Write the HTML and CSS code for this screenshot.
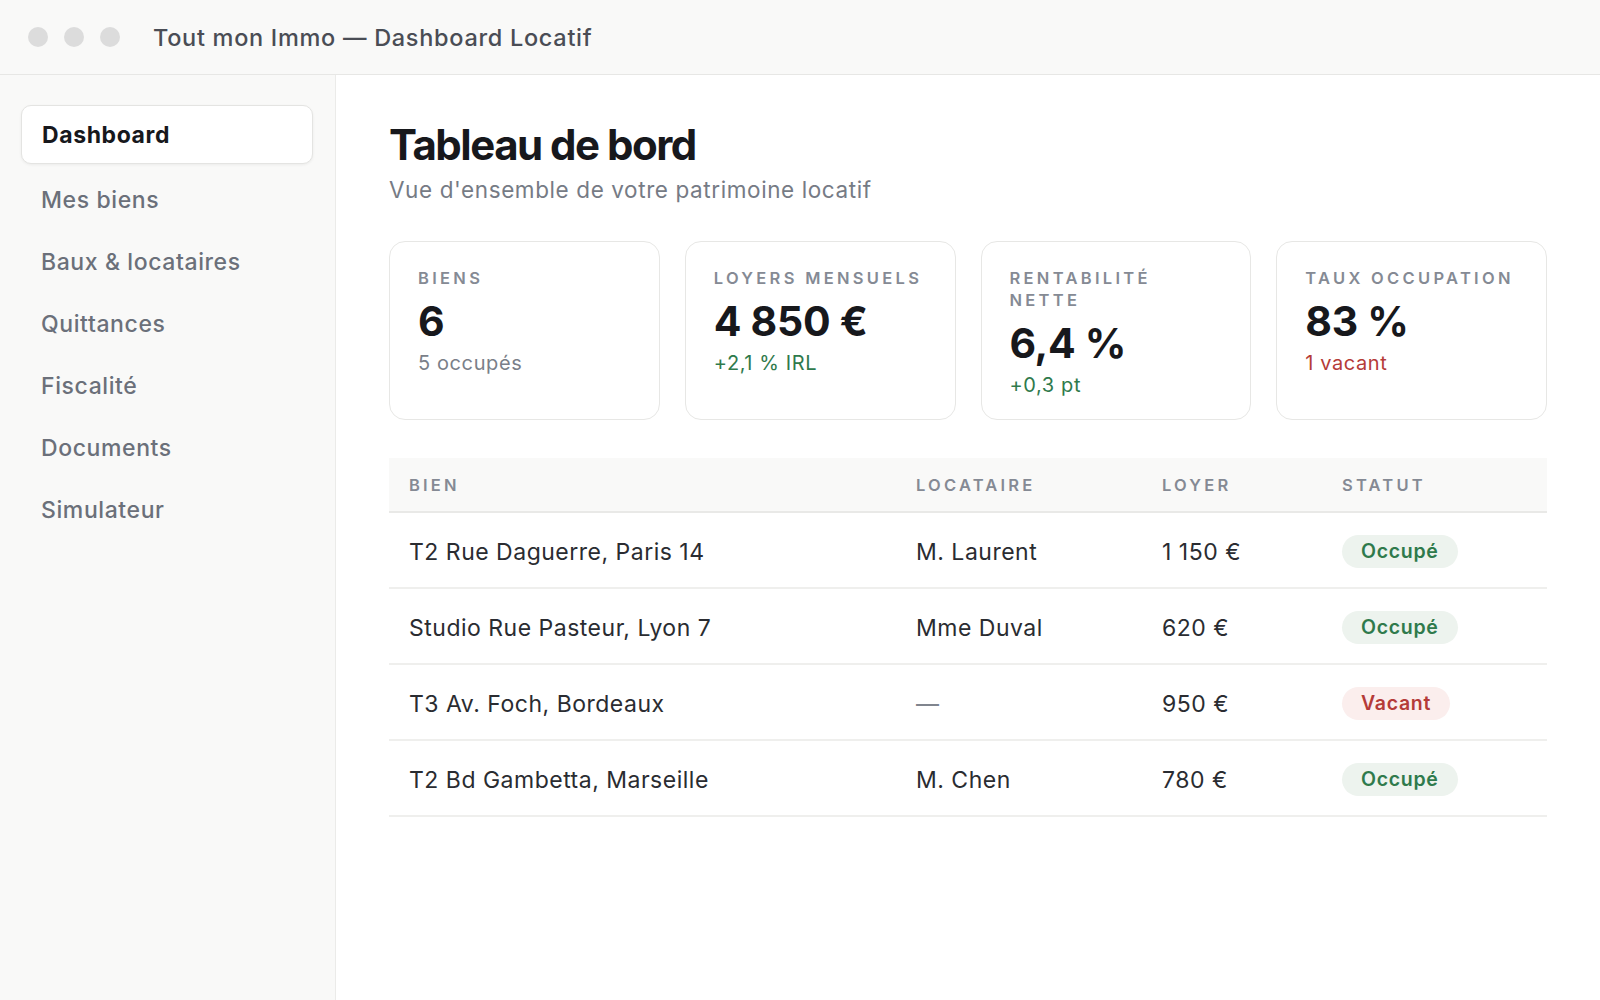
FILE: index.html
```html
<!DOCTYPE html>
<html lang="fr">
<head>
<meta charset="utf-8">
<title>Tout mon Immo — Dashboard Locatif</title>
<link rel="stylesheet" href="styles.css">
</head>
<body>
<div class="window">
  <header class="titlebar">
    <div class="dots"><span class="dot"></span><span class="dot"></span><span class="dot"></span></div>
    <div class="app-title">Tout mon Immo — Dashboard Locatif</div>
  </header>
  <div class="layout">
    <nav class="sidebar">
      <a class="nav-item active">Dashboard</a>
      <a class="nav-item">Mes biens</a>
      <a class="nav-item">Baux &amp; locataires</a>
      <a class="nav-item">Quittances</a>
      <a class="nav-item">Fiscalité</a>
      <a class="nav-item">Documents</a>
      <a class="nav-item">Simulateur</a>
    </nav>
    <main class="main">
      <h1 class="page-title">Tableau de bord</h1>
      <p class="page-sub">Vue d'ensemble de votre patrimoine locatif</p>
      <section class="cards">
        <div class="card">
          <div class="card-label">Biens</div>
          <div class="card-value">6</div>
          <div class="card-sub">5 occupés</div>
        </div>
        <div class="card">
          <div class="card-label">Loyers mensuels</div>
          <div class="card-value">4 850 €</div>
          <div class="card-sub pos">+2,1 % IRL</div>
        </div>
        <div class="card">
          <div class="card-label">Rentabilité nette</div>
          <div class="card-value">6,4 %</div>
          <div class="card-sub pos">+0,3 pt</div>
        </div>
        <div class="card">
          <div class="card-label">Taux occupation</div>
          <div class="card-value">83 %</div>
          <div class="card-sub neg">1 vacant</div>
        </div>
      </section>
      <table class="table">
        <colgroup>
          <col class="c-bien"><col class="c-loc"><col class="c-loyer"><col class="c-statut">
        </colgroup>
        <thead>
          <tr><th>Bien</th><th>Locataire</th><th>Loyer</th><th>Statut</th></tr>
        </thead>
        <tbody>
          <tr><td>T2 Rue Daguerre, Paris 14</td><td>M. Laurent</td><td>1 150 €</td><td><span class="badge ok">Occupé</span></td></tr>
          <tr><td>Studio Rue Pasteur, Lyon 7</td><td>Mme Duval</td><td>620 €</td><td><span class="badge ok">Occupé</span></td></tr>
          <tr><td>T3 Av. Foch, Bordeaux</td><td class="muted">—</td><td>950 €</td><td><span class="badge ko">Vacant</span></td></tr>
          <tr><td>T2 Bd Gambetta, Marseille</td><td>M. Chen</td><td>780 €</td><td><span class="badge ok">Occupé</span></td></tr>
        </tbody>
      </table>
    </main>
  </div>
</div>
</body>
</html>
```

FILE: styles.css
```css
* { box-sizing: border-box; }
html, body { margin: 0; padding: 0; }
body {
  font-family: Inter, "Noto Sans", "Liberation Sans", sans-serif;
  background: #ffffff;
  color: #1a1b1f;
}
.window { width: 1600px; height: 1000px; display: flex; flex-direction: column; }

.titlebar {
  height: 75px;
  flex: none;
  display: flex;
  align-items: center;
  padding-left: 28px;
  background: #f9f9f8;
  border-bottom: 1px solid #e7e7e5;
}
.dots { display: flex; gap: 16px; }
.dot { width: 20px; height: 20px; border-radius: 50%; background: #dcdcdc; }
.app-title {
  margin-left: 33px;
  font-size: 23.5px;
  font-weight: 500;
  color: #4a4d55;
  letter-spacing: 0.7px;
}

.layout { flex: 1; display: flex; min-height: 0; }

.sidebar {
  width: 336px;
  flex: none;
  background: #f9f9f8;
  border-right: 1px solid #ebebe9;
  padding: 30px 22px 0 21px;
  display: flex;
  flex-direction: column;
  gap: 3px;
}
.nav-item {
  display: flex;
  align-items: center;
  height: 59px;
  padding: 0 20px 0 19px;
  border: 1px solid transparent;
  border-radius: 10px;
  font-size: 23px;
  font-weight: 500;
  color: #6b707a;
  letter-spacing: 0.6px;
}
.nav-item.active {
  background: #ffffff;
  border-color: #e4e4e2;
  box-shadow: 0 1px 3px rgba(0,0,0,0.06);
  color: #17181c;
  font-weight: 700;
  margin-bottom: 3px;
  padding-left: 20px;
}

.main {
  flex: 1;
  padding: 45px 53px 0 53px;
  min-width: 0;
}
.page-title {
  margin: 0;
  font-size: 42px;
  line-height: 50px;
  font-weight: 700;
  letter-spacing: -1.5px;
  color: #17181c;
}
.page-sub {
  margin: 6px 0 0 0;
  font-size: 22.5px;
  line-height: 27px;
  color: #767b85;
  letter-spacing: 0.6px;
}

.cards {
  margin-top: 38px;
  display: grid;
  grid-template-columns: repeat(4, 1fr);
  gap: 25px;
}
.card {
  border: 1.5px solid #e7e7e5;
  border-radius: 16px;
  padding: 25px 28px 21px 28px;
  background: #fff;
}
.card-label {
  font-size: 16.5px;
  line-height: 22px;
  font-weight: 600;
  letter-spacing: 3.3px;
  text-transform: uppercase;
  color: #858a94;
}
.card-value {
  margin-top: 8px;
  font-size: 41px;
  line-height: 48px;
  font-weight: 700;
  letter-spacing: -0.3px;
  color: #17181c;
}
.card-sub {
  margin-top: 5px;
  font-size: 20px;
  line-height: 26px;
  color: #7a7f89;
  letter-spacing: 0.6px;
}
.card-sub.pos { color: #2f7a4c; }
.card-sub.neg { color: #b53b38; }

.table {
  margin-top: 38px;
  width: 100%;
  border-collapse: collapse;
  table-layout: fixed;
}
.c-bien { width: 507px; }
.c-loc { width: 246px; }
.c-loyer { width: 180px; }
.table th {
  height: 54px;
  background: #f9f9f8;
  border-bottom: 2px solid #e9e9e7;
  text-align: left;
  padding: 0 0 0 20px;
  font-size: 16.5px;
  font-weight: 600;
  letter-spacing: 3.2px;
  text-transform: uppercase;
  color: #858a94;
}
.table td {
  height: 76px;
  padding: 3px 0 0 20px;
  border-bottom: 2px solid #efefed;
  font-size: 23px;
  color: #2a2c31;
  letter-spacing: 0.5px;
}
.table td.muted { color: #80858e; }
.badge {
  display: inline-block;
  height: 33px;
  line-height: 33px;
  padding: 0 19px;
  border-radius: 17px;
  font-size: 19.5px;
  font-weight: 600;
  letter-spacing: 0.7px;
}
.badge.ok { background: #edf3ee; color: #2f7a4c; }
.badge.ko { background: #fbeeed; color: #b53b38; }
```
